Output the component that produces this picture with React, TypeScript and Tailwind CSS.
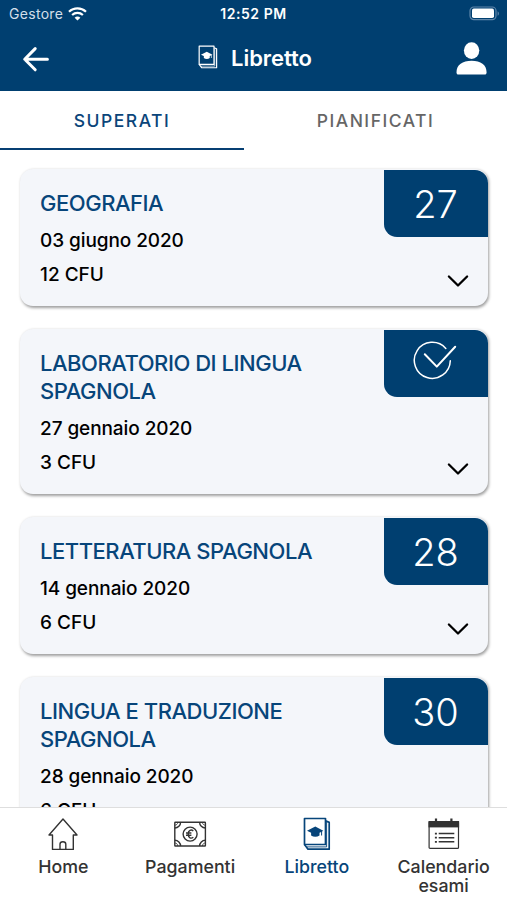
import type { ReactNode } from "react";

type Exam = {
  title: string;
  date: string;
  cfu: number;
  grade: number | null;
};

const EXAMS: Exam[] = [
  {
    title: "GEOGRAFIA",
    date: "03 giugno 2020",
    cfu: 12,
    grade: 27,
  },
  {
    title: "LABORATORIO DI LINGUA SPAGNOLA",
    date: "27 gennaio 2020",
    cfu: 3,
    grade: null,
  },
  {
    title: "LETTERATURA SPAGNOLA",
    date: "14 gennaio 2020",
    cfu: 6,
    grade: 28,
  },
  {
    title: "LINGUA E TRADUZIONE SPAGNOLA",
    date: "28 gennaio 2020",
    cfu: 6,
    grade: 30,
  },
];

function WifiIcon() {
  return (
    <svg width="19" height="14" viewBox="0 0 19 14" fill="none" stroke="white" strokeWidth="2.2">
      <path d="M1 4.8C5.8.2 13.2.2 18 4.8" />
      <path d="M4.1 8C7.2 5.1 11.8 5.1 14.9 8" />
      <path d="M9.5 13.6 6.6 10.7c1.6-1.5 4.2-1.5 5.8 0z" fill="white" stroke="none" />
    </svg>
  );
}

function BatteryIcon() {
  return (
    <svg width="31" height="15" viewBox="0 0 31 15" fill="none">
      <rect x="1" y="1" width="26" height="12.6" rx="3.8" stroke="#5f86aa" strokeWidth="1.2" />
      <rect x="3" y="2.6" width="22" height="9.4" rx="1.8" fill="white" />
      <path d="M28.6 5.2c1.8.8 1.8 3.8 0 4.6z" fill="#5f86aa" />
    </svg>
  );
}

function BookIcon({ className }: { className: string }) {
  return (
    <svg className={className} viewBox="0 0 28 34" fill="none" stroke="currentColor" strokeWidth="1.7">
      <path d="M1.5 1.5h21v26h-21z" strokeLinejoin="round" />
      <path d="M1.5 27.5 5 32.2h21.2V5.4l-3.7-1.6" strokeLinejoin="round" />
      <path d="M4 29.9h19.6V5" strokeWidth="0.9" />
      <path
        d="m12.3 9.6 8 4.2-1.2.6v4h-1v-3.5l-1.6.8v2.8c-2.4 1.6-6 1.6-8.4 0v-2.8L4 13.8z"
        fill="currentColor"
        stroke="none"
      />
    </svg>
  );
}

function HomeIcon() {
  return (
    <svg width="32" height="34" viewBox="0 0 32 34" fill="none" stroke="currentColor" strokeWidth="1.4" strokeLinejoin="round">
      <path d="M5.5 18H2L16 2l14 16h-3.7v14.4H5.5z" />
      <path d="M13 32.4v-5.2c0-3.2 5.8-3.2 5.8 0v5.2" />
    </svg>
  );
}

function MoneyIcon() {
  return (
    <svg width="34" height="34" viewBox="0 0 34 34" fill="none" stroke="currentColor" strokeWidth="1.4">
      <rect x="1.8" y="5.2" width="30.6" height="23.8" rx="0.5" />
      <path d="M7.6 5.2c0 3.2-2.6 5.8-5.8 5.8M26.6 5.2c0 3.2 2.6 5.8 5.8 5.8M7.6 29c0-3.2-2.6-5.8-5.8-5.8M26.6 29c0-3.2 2.6-5.8 5.8-5.8" />
      <path d="M4.8 5.2c0 1.7-1.3 3-3 3M29.4 5.2c0 1.7 1.3 3 3 3M4.8 29c0-1.7-1.3-3-3-3M29.4 29c0-1.7 1.3-3 3-3" strokeWidth="0.8" />
      <circle cx="17.1" cy="17.1" r="7" />
      <path d="M20.3 14c-2-1.8-5.1-.9-5.1 3.1s3.1 4.9 5.1 3.1M13 16h5.4M13 18.3h5.4" strokeWidth="1.4" />
    </svg>
  );
}

function CalendarIcon() {
  return (
    <svg width="34" height="34" viewBox="0 0 34 34" fill="none" stroke="currentColor">
      <path d="M1.5 4h30.6v6.4H1.5z" fill="currentColor" stroke="none" />
      <rect x="2.1" y="4.6" width="29.4" height="26.8" rx="1" strokeWidth="1.2" />
      <path d="M9 1.4v5M24.4 1.4v5" strokeWidth="2.2" />
      <path d="M7.9 16.6h2M7.9 20.7h2M7.9 24.8h2" strokeWidth="1.7" />
      <path d="M11.7 16.6h15.6M11.7 20.7h15.6M11.7 24.8h15.6" strokeWidth="1.5" />
    </svg>
  );
}

function CheckIcon() {
  return (
    <svg width="46" height="42" viewBox="0 0 46 42" fill="none" stroke="white">
      <path d="M33.8 8.4A18 18 0 1 0 38.3 20.8" strokeWidth="1.5" strokeLinecap="round" />
      <path d="m12.8 14.3 12 12.3L43.2 6.8" strokeWidth="2" strokeLinecap="round" strokeLinejoin="round" />
    </svg>
  );
}

function StatusBar() {
  return (
    <div className="grid h-[27px] grid-cols-3 items-center px-[9px] text-[14px] text-white">
      <div className="flex items-center gap-[5px]">
        <span className="tracking-[0.3px] text-[#d3dfea]">Gestore</span>
        <WifiIcon />
      </div>
      <span className="text-center text-[14px] font-semibold tracking-[0.55px]">12:52 PM</span>
      <div className="-mr-[2px] flex justify-end">
        <BatteryIcon />
      </div>
    </div>
  );
}

function Header() {
  return (
    <header className="h-[91px] shrink-0 bg-[#003f70]">
      <StatusBar />
      <div className="flex h-[63px] items-center justify-between pr-[20px] pl-[22px] text-white">
        <svg width="32" height="28" viewBox="0 0 32 28" fill="none" stroke="white" strokeWidth="3" strokeLinecap="round" strokeLinejoin="round">
          <path d="M13.2 3.6 2.7 14.2l10.5 10.6M3 14.2h22.4" />
        </svg>
        <h1 className="flex items-center gap-[13px] text-[22px] font-semibold tracking-[-0.05px]">
          <BookIcon className="-mt-[3px] h-[24px] w-[20px]" />
          <span>Libretto</span>
        </h1>
        <svg width="31" height="33" viewBox="0 0 31 33" fill="white">
          <ellipse cx="15.6" cy="8.6" rx="7.7" ry="8.3" />
          <path d="M.5 30.5C.5 22.8 6.5 18.8 15.6 18.8s15 4 15 11.7c0 1.3-.7 2.1-2 2.1H2.5c-1.3 0-2-.8-2-2.1z" />
        </svg>
      </div>
    </header>
  );
}

function Tabs() {
  return (
    <div className="flex h-[60px] shrink-0 text-[17.5px] font-medium">
      <button className="h-[59px] w-[244px] border-b-[2.5px] border-[#063f73] pt-[4px] tracking-[1.5px] text-[#0b457a]">
        SUPERATI
      </button>
      <button className="h-[59px] flex-1 pt-[2px] font-[450] tracking-[1.5px] text-[#666]">
        PIANIFICATI
      </button>
    </div>
  );
}

function ExamCard({ exam }: { exam: Exam }) {
  return (
    <article className="relative shrink-0 rounded-[13px] bg-[#f4f6fa] px-[20px] pt-[20px] pb-[19px] shadow-[1px_1.5px_3px_rgba(0,0,0,0.38)]">
      <h2 className="w-[320px] text-[22px] leading-[28px] font-[450] tracking-[-0.47px] text-[#07457a]">
        {exam.title}
      </h2>
      <p className="mt-[11.5px] text-[19px] leading-[24px] font-[450] tracking-[-0.08px] text-black">
        {exam.date}
      </p>
      <p className="mt-[10px] text-[19px] leading-[24px] font-[450] text-black">
        {exam.cfu} CFU
      </p>
      <div className="absolute top-[0.5px] right-[0.5px] flex h-[67px] w-[104px] items-center justify-center rounded-tr-[13px] rounded-bl-[13px] bg-[#003f70] text-[38px] font-light text-white">
        {exam.grade === null ? (
          <div className="pr-px pb-[4px]">
            <CheckIcon />
          </div>
        ) : (
          <span className="pt-[2px]">{exam.grade}</span>
        )}
      </div>
      <svg className="absolute right-[18px] bottom-[16.5px]" width="24" height="16" viewBox="0 0 24 16" fill="none" stroke="black" strokeWidth="2.3">
        <path d="m2.9 3.5 9.1 9 9.1-9" strokeLinecap="round" strokeLinejoin="round" />
      </svg>
    </article>
  );
}

function NavItem({ icon, label, active }: { icon: ReactNode; label: string; active?: boolean }) {
  return (
    <button
      className={`flex flex-1 flex-col items-center text-[17.8px] leading-[19.5px] font-medium ${
        active ? "text-[#07457a]" : "text-[#333]"
      }`}
    >
      {icon}
      <span className="mt-[5.5px] w-[105px]">{label}</span>
    </button>
  );
}

export default function App() {
  return (
    <div className="flex h-[900px] w-[507px] flex-col overflow-hidden bg-white font-['Inter',sans-serif]">
      <Header />
      <Tabs />
      <main className="flex min-h-0 flex-1 flex-col gap-[23.5px] overflow-hidden pt-[18px] pr-[19px] pl-[20px]">
        {EXAMS.map((exam) => (
          <ExamCard key={exam.title} exam={exam} />
        ))}
      </main>
      <nav className="flex h-[93px] shrink-0 items-start border-t border-[#dedede] bg-white pt-[9px]">
        <NavItem icon={<HomeIcon />} label="Home" />
        <NavItem icon={<MoneyIcon />} label="Pagamenti" />
        <NavItem icon={<BookIcon className="h-[34px] w-[28px]" />} label="Libretto" active />
        <NavItem icon={<CalendarIcon />} label="Calendario esami" />
      </nav>
    </div>
  );
}
